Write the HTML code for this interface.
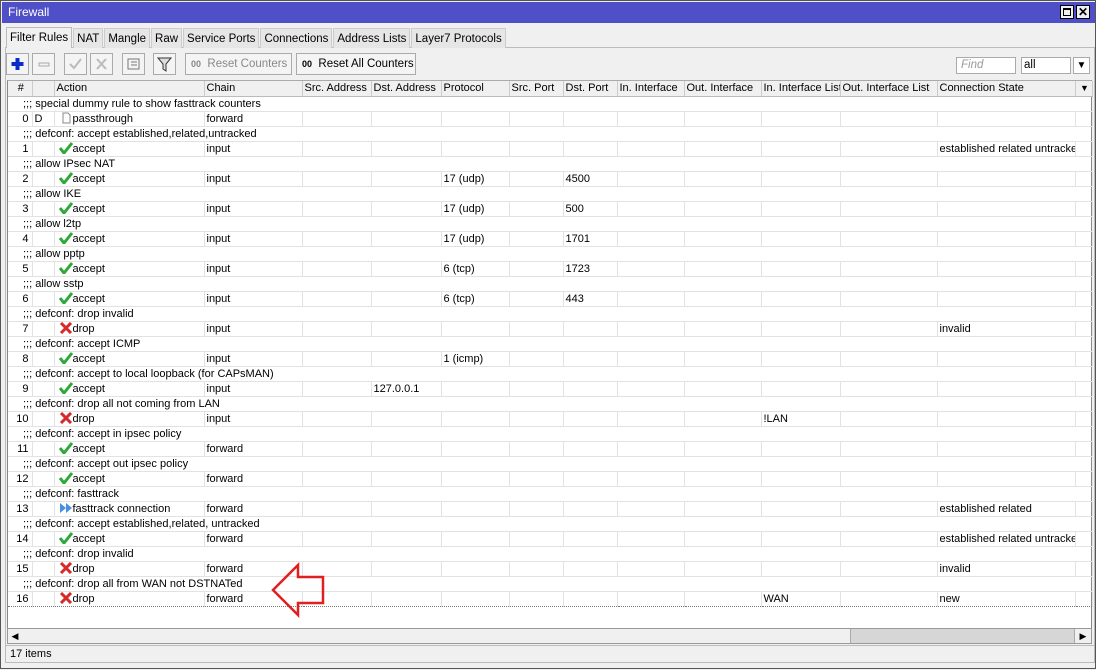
<!DOCTYPE html>
<html><head><meta charset="utf-8"><style>
*{box-sizing:border-box;margin:0;padding:0}
body{width:1096px;height:669px;background:#f0f0f0;font-family:"Liberation Sans",sans-serif;font-size:11px;color:#000;position:relative;overflow:hidden}
.win{position:absolute;left:0;top:0;width:1096px;height:669px;border:1px solid #555;background:#f0f0f0}
.title{position:absolute;left:1px;top:1px;width:1093px;height:21px;background:#4f50c8;color:#fff;font-size:12px;line-height:21px;padding-left:6px}
.tb{position:absolute;top:4px;width:14px;height:14px;background:#f0f0f0;border:1px solid #000}
.tabs{position:absolute;top:26px;left:5px;height:21px;display:flex}
.tab{height:20px;margin-top:1px;border:1px solid #ccc;border-bottom:none;background:#e6e6e6;padding:0 3px;line-height:20px;font-size:11.5px;margin-right:1px;white-space:nowrap}
.tab.a{background:#f0f0f0;margin-top:0;height:21px;border-color:#bbb}
.pane{position:absolute;left:4px;top:46px;width:1090px;height:598px;border:1px solid #bbb;border-bottom:none}
.btn{position:absolute;top:52px;height:22px;border:1px solid #aaa;background:#f4f4f4;font-size:11.5px;line-height:20px;white-space:nowrap;overflow:hidden}
.grid{position:absolute;left:6px;top:79px;width:1085px;height:548px;background:#fff;border-left:1px solid #888;border-right:1px solid #888;border-top:1px solid #aaa}
table{border-collapse:collapse;table-layout:fixed;width:1084px}
td{height:15px;line-height:14px;white-space:nowrap;overflow:hidden;border-right:1px solid #e2e2e2;border-bottom:1px solid #e2e2e2;padding-left:2px;font-size:11px}
tr.h td{background:#f0f0f0;border-right:1px solid #ccc;border-bottom:1px solid #bbb;height:15px}
td.c{padding-left:15px;border-right:none}
td.n{text-align:right;padding-right:3px}
.ic{display:inline-block;width:14px;height:12px;vertical-align:-2px;margin-left:2px}
tr.d1 td{border-top:1px dotted #777}
tr.d2 td{border-bottom:1px dotted #777}
.sb{position:absolute;left:6px;top:627px;width:1085px;height:16px;background:#f0f0f0;border:1px solid #999}
.status{position:absolute;left:4px;top:644px;width:1090px;height:18px;border:1px solid #bbb;padding-left:4px;line-height:17px;font-size:11px}
</style></head><body>
<div class="win">
<div class="title">Firewall</div>
<div class="tb" style="left:1059px"><div style="position:absolute;left:2px;top:2px;width:8px;height:8px;border:1px solid #000;border-top-width:2px"></div></div>
<div class="tb" style="left:1075px;font-size:12px;line-height:12px;text-align:center;font-weight:bold">✕</div>
<div class="pane"></div>
<div class="tabs">
<div class="tab a">Filter Rules</div><div class="tab">NAT</div><div class="tab">Mangle</div><div class="tab">Raw</div><div class="tab">Service Ports</div><div class="tab">Connections</div><div class="tab">Address Lists</div><div class="tab">Layer7 Protocols</div>
</div>
<div class="btn" style="left:5px;width:23px"><svg width="21" height="20"><path d="M10.5 4v12M4.5 10h12" stroke="#0a2cc8" stroke-width="4"/></svg></div>
<div class="btn" style="left:31px;width:23px"><svg width="21" height="20"><rect x="6" y="9" width="10" height="3" fill="none" stroke="#aaa"/></svg></div>
<div class="btn" style="left:63px;width:23px"><svg width="21" height="20"><path d="M5 10l4 4 7-9" fill="none" stroke="#bbb" stroke-width="2"/></svg></div>
<div class="btn" style="left:89px;width:23px"><svg width="21" height="20"><path d="M6 5l9 10M15 5l-9 10" stroke="#bbb" stroke-width="2"/></svg></div>
<div class="btn" style="left:121px;width:23px"><svg width="21" height="20"><rect x="5" y="5" width="11" height="10" fill="none" stroke="#777"/><path d="M8 8h6M8 11h6" stroke="#777"/></svg></div>
<div class="btn" style="left:152px;width:23px"><svg width="21" height="20"><path d="M4 4h13l-5 6v7l-3-2v-5z" fill="#ddd" stroke="#333"/></svg></div>
<div class="btn" style="left:184px;width:107px;color:#888;padding-left:5px"><b style="font-size:9px">00</b>&nbsp; Reset Counters</div>
<div class="btn" style="left:295px;width:120px;padding-left:5px"><b style="font-size:9px">00</b>&nbsp; Reset All Counters</div>
<div style="position:absolute;left:955px;top:56px;width:60px;height:17px;background:#fff;border:1px solid #aaa;color:#999;font-style:italic;padding-left:4px;line-height:15px;font-size:11.5px">Find</div>
<div style="position:absolute;left:1020px;top:56px;width:50px;height:17px;background:#fff;border:1px solid #aaa;padding-left:2px;line-height:15px;font-size:11.5px">all</div>
<div style="position:absolute;left:1072px;top:56px;width:17px;height:17px;background:#fff;border:1px solid #aaa;font-size:10px;text-align:center;line-height:15px">▼</div>
<div class="grid">
<table>
<colgroup><col style="width:24px"><col style="width:22px"><col style="width:150px"><col style="width:98px"><col style="width:69px"><col style="width:70px"><col style="width:68px"><col style="width:54px"><col style="width:54px"><col style="width:67px"><col style="width:77px"><col style="width:79px"><col style="width:97px"><col style="width:138px"><col style="width:17px"></colgroup>
<tr class="h"><td style="text-align:center">#</td><td></td><td>Action</td><td>Chain</td><td>Src. Address</td><td>Dst. Address</td><td>Protocol</td><td>Src. Port</td><td>Dst. Port</td><td>In. Interface</td><td>Out. Interface</td><td>In. Interface List</td><td>Out. Interface List</td><td>Connection State</td><td style="font-size:9px;text-align:center">▼</td></tr>
<tr><td class="c" colspan="15">;;; special dummy rule to show fasttrack counters</td></tr>
<tr><td class="n">0</td><td>D</td><td><svg class="ic" viewBox="0 0 14 12"><path d="M4 1h5l2 2v8H4z" fill="#fff" stroke="#888"/></svg>passthrough</td><td>forward</td><td></td><td></td><td></td><td></td><td></td><td></td><td></td><td></td><td></td><td></td><td></td></tr>
<tr><td class="c" colspan="15">;;; defconf: accept established,related,untracked</td></tr>
<tr><td class="n">1</td><td></td><td><svg class="ic" viewBox="0 0 14 12"><path d="M1 6l4 5 8-10" fill="none" stroke="#2fa83a" stroke-width="3"/></svg>accept</td><td>input</td><td></td><td></td><td></td><td></td><td></td><td></td><td></td><td></td><td></td><td>established related untracked</td><td></td></tr>
<tr><td class="c" colspan="15">;;; allow IPsec NAT</td></tr>
<tr><td class="n">2</td><td></td><td><svg class="ic" viewBox="0 0 14 12"><path d="M1 6l4 5 8-10" fill="none" stroke="#2fa83a" stroke-width="3"/></svg>accept</td><td>input</td><td></td><td></td><td>17 (udp)</td><td></td><td>4500</td><td></td><td></td><td></td><td></td><td></td><td></td></tr>
<tr><td class="c" colspan="15">;;; allow IKE</td></tr>
<tr><td class="n">3</td><td></td><td><svg class="ic" viewBox="0 0 14 12"><path d="M1 6l4 5 8-10" fill="none" stroke="#2fa83a" stroke-width="3"/></svg>accept</td><td>input</td><td></td><td></td><td>17 (udp)</td><td></td><td>500</td><td></td><td></td><td></td><td></td><td></td><td></td></tr>
<tr><td class="c" colspan="15">;;; allow l2tp</td></tr>
<tr><td class="n">4</td><td></td><td><svg class="ic" viewBox="0 0 14 12"><path d="M1 6l4 5 8-10" fill="none" stroke="#2fa83a" stroke-width="3"/></svg>accept</td><td>input</td><td></td><td></td><td>17 (udp)</td><td></td><td>1701</td><td></td><td></td><td></td><td></td><td></td><td></td></tr>
<tr><td class="c" colspan="15">;;; allow pptp</td></tr>
<tr><td class="n">5</td><td></td><td><svg class="ic" viewBox="0 0 14 12"><path d="M1 6l4 5 8-10" fill="none" stroke="#2fa83a" stroke-width="3"/></svg>accept</td><td>input</td><td></td><td></td><td>6 (tcp)</td><td></td><td>1723</td><td></td><td></td><td></td><td></td><td></td><td></td></tr>
<tr><td class="c" colspan="15">;;; allow sstp</td></tr>
<tr><td class="n">6</td><td></td><td><svg class="ic" viewBox="0 0 14 12"><path d="M1 6l4 5 8-10" fill="none" stroke="#2fa83a" stroke-width="3"/></svg>accept</td><td>input</td><td></td><td></td><td>6 (tcp)</td><td></td><td>443</td><td></td><td></td><td></td><td></td><td></td><td></td></tr>
<tr><td class="c" colspan="15">;;; defconf: drop invalid</td></tr>
<tr><td class="n">7</td><td></td><td><svg class="ic" viewBox="0 0 14 12"><path d="M2 1l10 10M12 1L2 11" stroke="#d42a2a" stroke-width="3"/></svg>drop</td><td>input</td><td></td><td></td><td></td><td></td><td></td><td></td><td></td><td></td><td></td><td>invalid</td><td></td></tr>
<tr><td class="c" colspan="15">;;; defconf: accept ICMP</td></tr>
<tr><td class="n">8</td><td></td><td><svg class="ic" viewBox="0 0 14 12"><path d="M1 6l4 5 8-10" fill="none" stroke="#2fa83a" stroke-width="3"/></svg>accept</td><td>input</td><td></td><td></td><td>1 (icmp)</td><td></td><td></td><td></td><td></td><td></td><td></td><td></td><td></td></tr>
<tr><td class="c" colspan="15">;;; defconf: accept to local loopback (for CAPsMAN)</td></tr>
<tr><td class="n">9</td><td></td><td><svg class="ic" viewBox="0 0 14 12"><path d="M1 6l4 5 8-10" fill="none" stroke="#2fa83a" stroke-width="3"/></svg>accept</td><td>input</td><td></td><td>127.0.0.1</td><td></td><td></td><td></td><td></td><td></td><td></td><td></td><td></td><td></td></tr>
<tr><td class="c" colspan="15">;;; defconf: drop all not coming from LAN</td></tr>
<tr><td class="n">10</td><td></td><td><svg class="ic" viewBox="0 0 14 12"><path d="M2 1l10 10M12 1L2 11" stroke="#d42a2a" stroke-width="3"/></svg>drop</td><td>input</td><td></td><td></td><td></td><td></td><td></td><td></td><td></td><td>!LAN</td><td></td><td></td><td></td></tr>
<tr><td class="c" colspan="15">;;; defconf: accept in ipsec policy</td></tr>
<tr><td class="n">11</td><td></td><td><svg class="ic" viewBox="0 0 14 12"><path d="M1 6l4 5 8-10" fill="none" stroke="#2fa83a" stroke-width="3"/></svg>accept</td><td>forward</td><td></td><td></td><td></td><td></td><td></td><td></td><td></td><td></td><td></td><td></td><td></td></tr>
<tr><td class="c" colspan="15">;;; defconf: accept out ipsec policy</td></tr>
<tr><td class="n">12</td><td></td><td><svg class="ic" viewBox="0 0 14 12"><path d="M1 6l4 5 8-10" fill="none" stroke="#2fa83a" stroke-width="3"/></svg>accept</td><td>forward</td><td></td><td></td><td></td><td></td><td></td><td></td><td></td><td></td><td></td><td></td><td></td></tr>
<tr><td class="c" colspan="15">;;; defconf: fasttrack</td></tr>
<tr><td class="n">13</td><td></td><td><svg class="ic" viewBox="0 0 14 12"><path d="M1 1l6 5-6 5zM7 1l6 5-6 5z" fill="#4a90e2"/></svg>fasttrack connection</td><td>forward</td><td></td><td></td><td></td><td></td><td></td><td></td><td></td><td></td><td></td><td>established related</td><td></td></tr>
<tr><td class="c" colspan="15">;;; defconf: accept established,related, untracked</td></tr>
<tr><td class="n">14</td><td></td><td><svg class="ic" viewBox="0 0 14 12"><path d="M1 6l4 5 8-10" fill="none" stroke="#2fa83a" stroke-width="3"/></svg>accept</td><td>forward</td><td></td><td></td><td></td><td></td><td></td><td></td><td></td><td></td><td></td><td>established related untracked</td><td></td></tr>
<tr><td class="c" colspan="15">;;; defconf: drop invalid</td></tr>
<tr><td class="n">15</td><td></td><td><svg class="ic" viewBox="0 0 14 12"><path d="M2 1l10 10M12 1L2 11" stroke="#d42a2a" stroke-width="3"/></svg>drop</td><td>forward</td><td></td><td></td><td></td><td></td><td></td><td></td><td></td><td></td><td></td><td>invalid</td><td></td></tr>
<tr class="d1"><td class="c" colspan="15">;;; defconf: drop all from WAN not DSTNATed</td></tr>
<tr class="d2"><td class="n">16</td><td></td><td><svg class="ic" viewBox="0 0 14 12"><path d="M2 1l10 10M12 1L2 11" stroke="#d42a2a" stroke-width="3"/></svg>drop</td><td>forward</td><td></td><td></td><td></td><td></td><td></td><td></td><td></td><td>WAN</td><td></td><td>new</td><td></td></tr>
</table>
</div>
<svg style="position:absolute;left:0;top:0" width="1096" height="669"><path d="M272 589L297 564V576H322V602H297V614Z" fill="none" stroke="#e02020" stroke-width="2.5"/></svg>
<div class="sb"><div style="position:absolute;left:842px;top:0;width:224px;height:14px;background:#d6d6d6;border-left:1px solid #aaa"></div><div style="position:absolute;left:1066px;top:0;width:17px;height:14px;border-left:1px solid #aaa;font-size:9px;text-align:center;line-height:14px">▶</div><div style="position:absolute;left:0;top:0;width:14px;height:14px;font-size:9px;text-align:center;line-height:14px">◀</div></div>
<div class="status">17 items</div>
</div>
</body></html>
